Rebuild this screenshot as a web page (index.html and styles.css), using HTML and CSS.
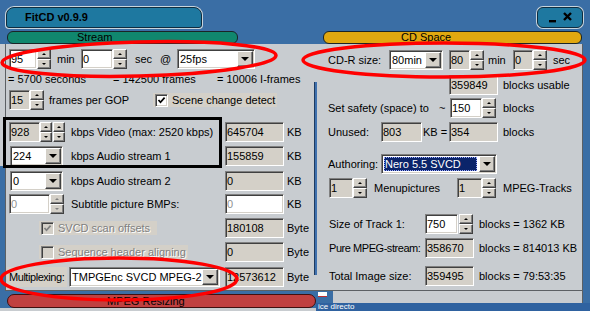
FILE: index.html
```html
<!DOCTYPE html>
<html lang="en">
<head>
  <meta charset="UTF-8">
  <meta name="viewport" content="width=device-width, initial-scale=1.0">
  <title>FitCD v0.9.9</title>
  <link rel="stylesheet" href="styles.css">
</head>
<body>
  <div class="titlebar">
    <div class="title">FitCD v0.9.9</div>
    <div class="winbtns">
      <svg width="44" height="19" viewBox="0 0 44 19">
        <rect x="11" y="12" width="7" height="2.4" fill="#000"/>
        <path d="M26 5 L33 12 M33 5 L26 12" stroke="#000" stroke-width="2.4"/>
      </svg>
    </div>
  </div>

  <div class="tabs">
    <div class="tab stream">Stream</div>
    <div class="tab cdspace">CD Space</div>
  </div>

  <div class="panel">
    <div class="col left">
      <div class="row ml3">
        <span class="field white w28">95</span><span class="spin"><b></b><b></b></span>
        <span class="lbl w30 pl6">min</span>
        <span class="field white w32">0</span><span class="spin"><b></b><b></b></span>
        <span class="lbl w33 pl8">sec</span>
        <span class="lbl w17">@</span>
        <span class="select w78"><span class="val">25fps</span><span class="drop"></span></span>
      </div>
      <div class="row info mt3 ml2">
        <span class="lbl w105">= 5700 seconds</span>
        <span class="lbl w104">= 142500 frames</span>
        <span class="lbl">= 10006 I-frames</span>
      </div>
      <div class="row mt4 ml3">
        <span class="field w21">15</span><span class="spin"><b></b><b></b></span>
        <span class="lbl w109 pl5">frames per GOP</span>
        <span class="cbox w124"><span class="chk white"><svg width="9" height="9" viewBox="0 0 9 9"><path d="M1.5 4 L3.5 6.3 L7.6 1.6" fill="none" stroke="#000" stroke-width="1.7"/></svg></span>Scene change detect</span>
      </div>
      <div class="row mt12 ml3">
        <span class="field w31">928</span><span class="spin narrow"><b></b><b></b></span><span class="spin narrow ml1"><b></b><b></b></span>
        <span class="lbl w160 pl6">kbps Video (max: 2520 kbps)</span>
        <span class="field kb">645704</span><span class="lbl pl3">KB</span>
      </div>
      <div class="row mt4 ml4">
        <span class="select w53"><span class="val">224</span><span class="drop"></span></span>
        <span class="lbl w162 pl8">kbps Audio stream 1</span>
        <span class="field kb">155859</span><span class="lbl pl3">KB</span>
      </div>
      <div class="row mt5 ml4">
        <span class="select w53"><span class="val">0</span><span class="drop"></span></span>
        <span class="lbl w162 pl8">kbps Audio stream 2</span>
        <span class="field kb">0</span><span class="lbl pl3">KB</span>
      </div>
      <div class="row mt3 ml3">
        <span class="field white dis w41">0</span><span class="spin dis"><b></b><b></b></span>
        <span class="lbl w161 pl7">Subtitle picture BMPs:</span>
        <span class="field white dis kb">0</span><span class="lbl pl3">KB</span>
      </div>
      <div class="row mt4 ml33">
        <span class="cbox dis w118"><span class="chk"><svg width="9" height="9" viewBox="0 0 9 9"><path d="M1.5 4 L3.5 6.3 L7.6 1.6" fill="none" stroke="#808080" stroke-width="1.7"/></svg></span>SVCD scan offsets</span>
        <span class="field kb ml68">180108</span><span class="lbl pl3">Byte</span>
      </div>
      <div class="row mt4 ml33">
        <span class="cbox dis w149"><span class="chk"></span>Sequence header aligning</span>
        <span class="field kb ml37">0</span><span class="lbl pl3">Byte</span>
      </div>
      <div class="row mt5 ml1">
        <span class="mlabel tight w60">Multiplexing:</span>
        <span class="select w151 ml2"><span class="val">TMPGEnc SVCD MPEG-2</span><span class="drop"></span></span>
        <span class="field kb ml5">12573612</span><span class="lbl pl3">Byte</span>
      </div>
    </div>

    <div class="sep"></div>

    <div class="col right">
      <div class="row ml11">
        <span class="lbl w61">CD-R size:</span>
        <span class="select w54"><span class="val">80min</span><span class="drop"></span></span>
        <span class="field w21 ml6">80</span><span class="spin"><b></b><b></b></span>
        <span class="lbl w29 pl4">min</span>
        <span class="field w20">0</span><span class="spin"><b></b><b></b></span>
        <span class="lbl pl6">sec</span>
      </div>
      <div class="row mt5 ml132">
        <span class="field w49">359849</span><span class="lbl pl5">blocks usable</span>
      </div>
      <div class="row mt3 ml11">
        <span class="lbl w111">Set safety (space) to</span>
        <span class="lbl w11">~</span>
        <span class="field white w32">150</span><span class="spin"><b></b><b></b></span>
        <span class="lbl pl7">blocks</span>
      </div>
      <div class="row mt4 ml11">
        <span class="lbl w53">Unused:</span>
        <span class="field w41">803</span>
        <span class="lbl w27 pl1">KB =</span>
        <span class="field w49">354</span><span class="lbl pl5">blocks</span>
      </div>
      <div class="row mt12 ml11">
        <span class="lbl w53">Authoring:</span>
        <span class="select w116"><span class="val hl">Nero 5.5 SVCD</span><span class="drop"></span></span>
      </div>
      <div class="row mt4 ml12">
        <span class="field w24">1</span><span class="spin"><b></b><b></b></span>
        <span class="lbl w90 pl7">Menupictures</span>
        <span class="field w25">1</span><span class="spin"><b></b><b></b></span>
        <span class="lbl pl7">MPEG-Tracks</span>
      </div>
      <div class="row mt16 ml12">
        <span class="lbl w96">Size of Track 1:</span>
        <span class="field white w33">750</span><span class="spin ml1"><b></b><b></b></span>
        <span class="lbl pl6">blocks = 1362 KB</span>
      </div>
      <div class="row mt4 ml12">
        <span class="lbl tight w96">Pure MPEG-stream:</span>
        <span class="field w49">358670</span><span class="lbl pl5">blocks = 814013 KB</span>
      </div>
      <div class="row mt8 ml12">
        <span class="lbl w96">Total Image size:</span>
        <span class="field w49">359495</span><span class="lbl pl5">blocks = 79:53:35</span>
      </div>
    </div>
  </div>

  <div class="bottom">
    <div class="bot-left">
      <div class="tab mpeg">MPEG Resizing</div>
      <div class="strip"></div>
    </div>
    <div class="bot-right">
      <div class="bot-top"><span class="notch"><i></i></span><span class="graybit"></span></div>
      <div class="taskbar">ice directo</div>
    </div>
  </div>

  <svg class="marks" width="590" height="311" viewBox="0 0 590 311">
    <ellipse cx="139" cy="59" rx="137" ry="17" transform="rotate(-1.5 139 59)" fill="none" stroke="#f00" stroke-width="3.5"/>
    <ellipse cx="444" cy="60" rx="141" ry="17" fill="none" stroke="#f00" stroke-width="3.5"/>
    <ellipse cx="119" cy="279" rx="118" ry="21" fill="none" stroke="#f00" stroke-width="3.5"/>
    <rect x="4.5" y="118.5" width="216" height="48" fill="none" stroke="#000" stroke-width="3"/>
  </svg>
</body>
</html>
```

FILE: styles.css
```css
* { box-sizing: border-box; }
body {
  margin: 0; width: 590px; height: 311px; overflow: hidden; position: relative;
  background: linear-gradient(#c8ccd0, #c8ccd0) 0 44px / 5px 122px no-repeat, #3a6ea5;
  font: 11px "Liberation Sans", Arial, sans-serif; color: #000;
}

/* title + tabs */
.titlebar { display: flex; height: 31px; }
.title { margin: 7px 0 0 6px; width: 196px; height: 21px; padding: 3px 0 0 18px; background: #1e78a0; border: 1px solid #0e2c40; border-radius: 8px 8px 3px 3px; box-shadow: 0 0 0 1px #c8d4dc; font-weight: bold; }
.winbtns { margin: 7px 7px 0 auto; width: 46px; height: 21px; background: #1e78a0; border: 1px solid #0e2c40; border-radius: 6px; box-shadow: 0 0 0 1px #c8d4dc; }
.winbtns svg { display: block; }
.tabs { display: flex; height: 13px; }
.tab { height: 13px; line-height: 11px; border: 1px solid #1a2426; border-radius: 6px; white-space: nowrap; }
.stream { margin-left: 7px; width: 231px; padding-left: 69px; background: #10876e; }
.cdspace { margin-left: 85px; width: 259px; padding-left: 77px; background: #e0a810; }

/* main panel */
.panel { display: flex; margin-left: 5px; width: 578px; height: 247px; background: #c8ccd0; border: 1px solid #5c6064; border-top: 0; }
.col { display: flex; flex-direction: column; }
.left { width: 308px; padding-top: 5px; }
.right { width: 265px; padding-top: 6px; }
.sep { width: 3px; margin-top: 38px; height: 193px; background: #3f70ad; box-shadow: inset 1px 0 #1d3a60; }
.row { display: flex; align-items: center; height: 20px; flex: none; }
.row.info { height: 14px; }

.lbl { flex: none; white-space: nowrap; }
.tight { letter-spacing: -0.45px; }
.field { flex: none; height: 20px; line-height: 18px; padding-left: 1px; white-space: nowrap; overflow: hidden; background: #d4d0c8; border: 1px solid; border-color: #808080 #fff #fff #808080; box-shadow: inset 1px 1px #404040, inset -1px -1px #d4d0c8; }
.field.white { background: #fff; }
.field.dis { color: #909090; }
.kb { width: 59px; }

.spin { flex: none; width: 14px; height: 20px; display: flex; flex-direction: column; }
.spin.narrow { width: 12px; }
.spin b { flex: 1; display: flex; align-items: center; justify-content: center; background: #d4d0c8; border: 1px solid; border-color: #fff #404040 #404040 #fff; box-shadow: inset -1px -1px #808080; }
.spin b::after { content: ""; border: 2px solid transparent; border-top: 0; border-bottom-color: #000; }
.spin b + b::after { border-top: 2px solid #000; border-bottom: 0; }
.spin.dis b::after { border-bottom-color: #808080; }
.spin.dis b + b::after { border-top-color: #808080; }

.select { flex: none; height: 20px; display: flex; align-items: center; padding: 0 1px 0 2px; background: #fff; border: 1px solid; border-color: #808080 #fff #fff #808080; box-shadow: inset 1px 1px #404040, inset -1px -1px #d4d0c8; white-space: nowrap; }
.select .val { flex: 1; overflow: hidden; }
.select .val.hl { margin-right: 2px; padding-left: 1px; line-height: 14px; background: #0a246a; color: #fff; outline: 1px dotted #9aa8ff; outline-offset: -1px; }
.drop { flex: none; width: 16px; height: 16px; display: flex; align-items: center; justify-content: center; background: #d4d0c8; border: 1px solid; border-color: #fff #404040 #404040 #fff; box-shadow: inset -1px -1px #808080; }
.drop::after { content: ""; border: 4px solid transparent; border-bottom: 0; border-top-color: #000; }

.cbox { flex: none; height: 14px; display: flex; align-items: center; padding-left: 2px; background: #d4d0c8; white-space: nowrap; }
.cbox.dis { color: #808080; text-shadow: 1px 1px #fff; }
.chk { flex: none; width: 13px; height: 13px; margin-right: 4px; display: flex; align-items: center; justify-content: center; background: #d4d0c8; border: 1px solid; border-color: #808080 #fff #fff #808080; box-shadow: inset 1px 1px #404040, inset -1px -1px #d4d0c8; }
.chk.white { background: #fff; }
.mlabel { flex: none; height: 20px; line-height: 20px; padding-left: 2px; background: #d4d0c8; white-space: nowrap; }

/* bottom */
.bottom { display: flex; height: 20px; }
.bot-left { width: 316px; display: flex; flex-direction: column; }
.mpeg { margin: 3px 0 0 7px; width: 309px; height: 14px; line-height: 12px; padding-left: 99px; background: #c04040; border-color: #401010; border-radius: 7px; }
.strip { height: 3px; background: #c8ccd0; }
.bot-right { flex: 1; display: flex; flex-direction: column; }
.bot-top { display: flex; height: 12px; }
.notch { width: 17px; padding: 1px 0 0 2px; }
.notch i { display: block; width: 9px; height: 5px; background: #fff; border-bottom: 1px solid #c03030; }
.graybit { width: 250px; background: #c8ccd0; border-right: 1px solid #5c6064; }
.taskbar { height: 8px; overflow: hidden; padding-left: 2px; font-size: 8px; line-height: 8px; color: #fff; background: #2f62a0; }

.marks { position: absolute; top: 0; left: 0; pointer-events: none; }

/* spacing helpers */
.mt3 { margin-top: 3px; } .mt4 { margin-top: 4px; } .mt5 { margin-top: 5px; } .mt8 { margin-top: 8px; }
.mt12 { margin-top: 12px; } .mt16 { margin-top: 16px; }
.ml1 { margin-left: 1px; } .ml2 { margin-left: 2px; } .ml3 { margin-left: 3px; } .ml4 { margin-left: 4px; }
.ml5 { margin-left: 5px; } .ml6 { margin-left: 6px; } .ml11 { margin-left: 11px; } .ml12 { margin-left: 12px; }
.ml33 { margin-left: 33px; } .ml37 { margin-left: 37px; } .ml68 { margin-left: 68px; } .ml132 { margin-left: 132px; }
.pl1 { padding-left: 1px; } .pl3 { padding-left: 3px; } .pl4 { padding-left: 4px; } .pl5 { padding-left: 5px; }
.pl6 { padding-left: 6px; } .pl7 { padding-left: 7px; } .pl8 { padding-left: 8px; }
.w11 { width: 11px; } .w17 { width: 17px; } .w20 { width: 20px; } .w21 { width: 21px; } .w24 { width: 24px; }
.w25 { width: 25px; } .w27 { width: 27px; } .w28 { width: 28px; } .w29 { width: 29px; } .w30 { width: 30px; }
.w31 { width: 31px; } .w32 { width: 32px; } .w33 { width: 33px; } .w41 { width: 41px; } .w49 { width: 49px; }
.w53 { width: 53px; } .w54 { width: 54px; } .w60 { width: 60px; } .w61 { width: 61px; } .w78 { width: 78px; }
.w90 { width: 90px; } .w96 { width: 96px; } .w104 { width: 104px; } .w105 { width: 105px; } .w109 { width: 109px; }
.w111 { width: 111px; } .w116 { width: 116px; } .w118 { width: 118px; } .w124 { width: 124px; } .w149 { width: 149px; }
.w151 { width: 151px; } .w160 { width: 160px; } .w161 { width: 161px; } .w162 { width: 162px; }
```
